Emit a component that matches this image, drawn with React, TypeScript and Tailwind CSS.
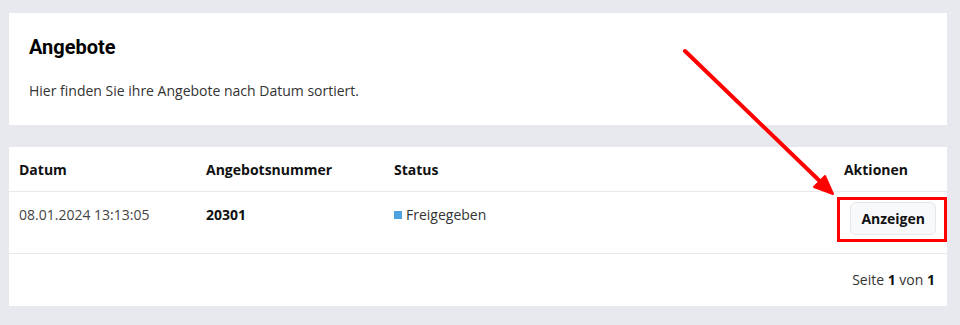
import React from "react";

export default function App() {
  return (
    <div className="relative w-[960px] h-[325px] bg-[#e8e9ee] pt-[13px] pl-[9px] pr-[13px] font-['Open_Sans',sans-serif] text-[14px] text-[#222]">
      <div className="bg-white h-[112px] pl-[20px] pt-[22px]">
        <h1 className="font-['Roboto',sans-serif] font-bold text-[20px] leading-[24px] text-black">Angebote</h1>
        <p className="mt-[22px] leading-[20px] text-[#333]">Hier finden Sie ihre Angebote nach Datum sortiert.</p>
      </div>
      <div className="bg-white mt-[22px] h-[159px]">
        <div className="grid grid-cols-[187px_188px_1fr_auto] h-[45px] items-center border-b border-[#e9e9e9] font-bold text-[#111]">
          <div className="pl-[10px]">Datum</div>
          <div className="pl-[10px]">Angebotsnummer</div>
          <div className="pl-[10px]">Status</div>
          <div className="pr-[39px]">Aktionen</div>
        </div>
        <div className="grid grid-cols-[187px_188px_1fr_auto] h-[62px] border-b border-[#e9e9e9]">
          <div className="pl-[10px] pt-[12px] text-[#444]">08.01.2024 13:13:05</div>
          <div className="pl-[10px] pt-[12px] font-bold text-[#111]">20301</div>
          <div className="pl-[10px] pt-[12px] flex items-start text-[#333]">
            <span className="w-[8px] h-[8px] bg-[#4ea2e0] mt-[7px] mr-[4px]" />
            Freigegeben
          </div>
          <div className="pr-[11px] pt-[10px]">
            <button className="h-[33px] px-[10px] rounded-[6px] border border-[#e6e7ea] bg-[#f8f9fa] font-bold text-[#111]">Anzeigen</button>
          </div>
        </div>
        <div className="flex justify-end items-center h-[51px] pr-[12px] text-[#333]">
          <span>Seite <b className="text-[#111]">1</b> von <b className="text-[#111]">1</b></span>
        </div>
      </div>
      <div className="absolute left-[837px] top-[197px] w-[110px] h-[45px] border-[3px] border-[#ff0000]" />
      <svg className="absolute left-0 top-0 pointer-events-none" width="960" height="325">
        <line x1="685" y1="51" x2="828" y2="189" stroke="#ff0000" strokeWidth="4" strokeLinecap="round" />
        <polygon points="833,194 814,187 825,176" fill="#ff0000" stroke="#ff0000" strokeWidth="2" strokeLinejoin="round" />
      </svg>
    </div>
  );
}
